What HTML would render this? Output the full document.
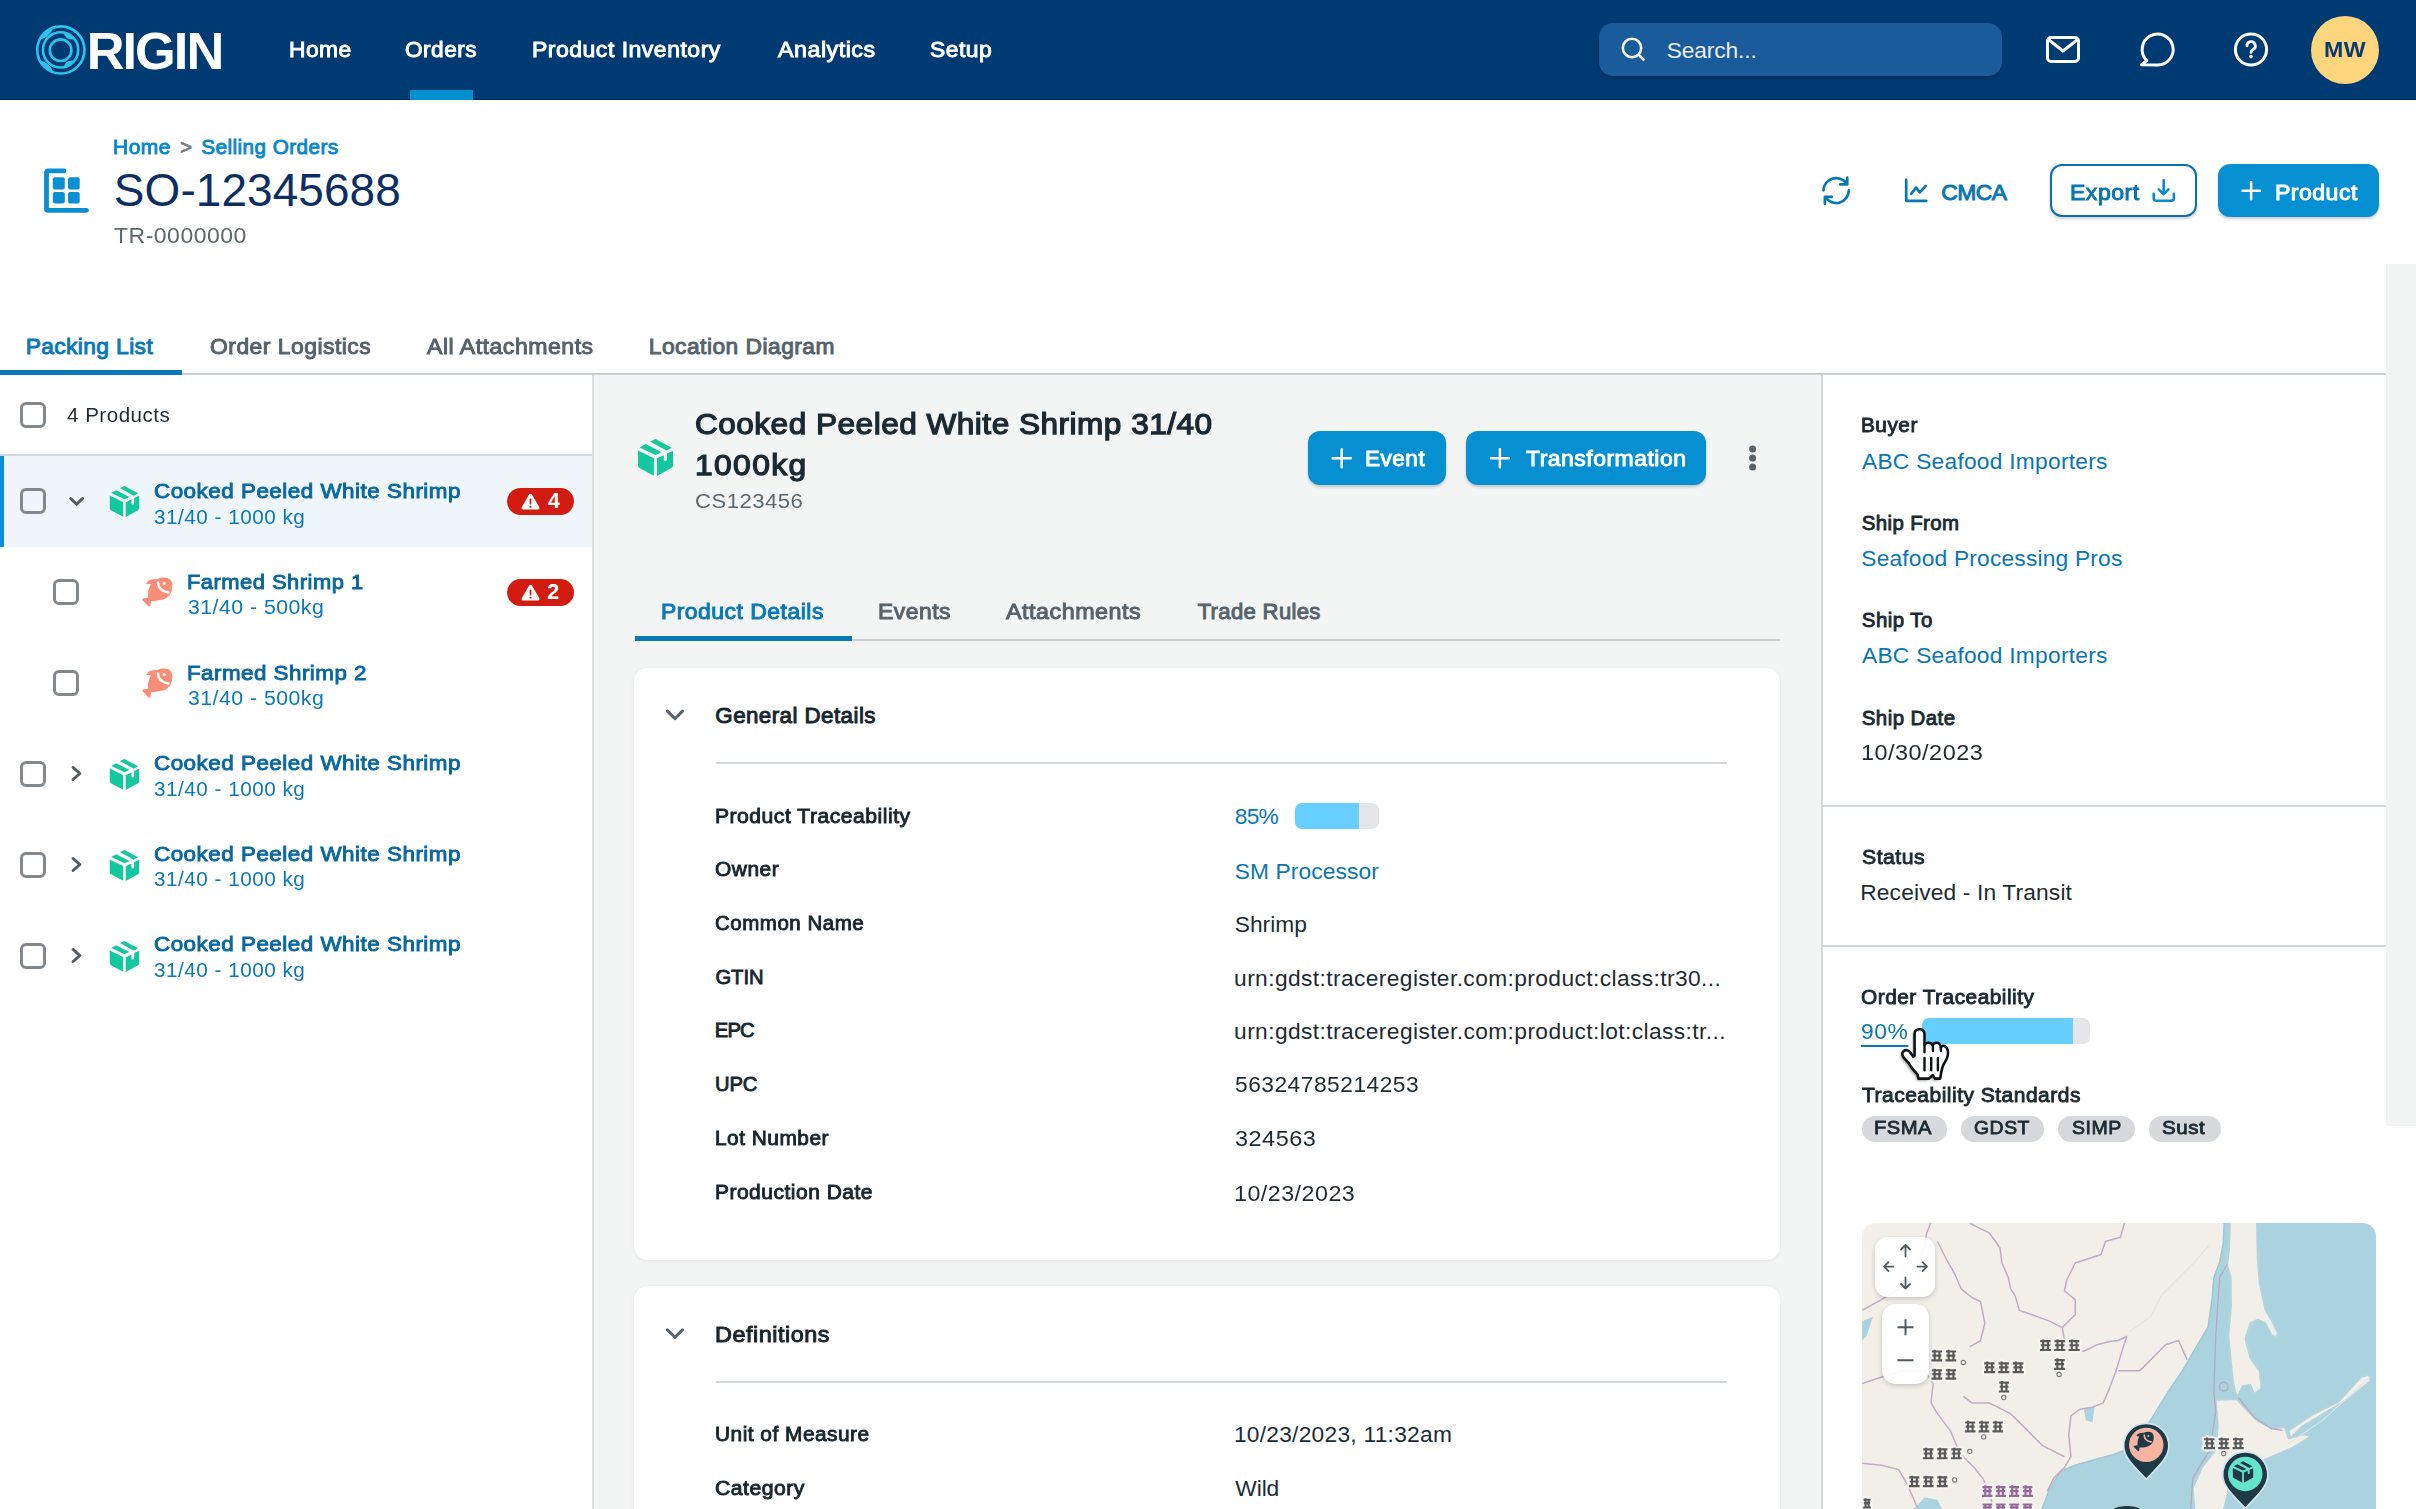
<!DOCTYPE html>
<html><head><meta charset="utf-8"><title>SO-12345688</title>
<style>
html,body{margin:0;padding:0;width:2416px;height:1509px;overflow:hidden;background:#fff;font-family:"Liberation Sans",sans-serif}
.a{position:absolute}
.t{position:absolute;white-space:nowrap;line-height:0;font-family:"Liberation Sans",sans-serif}
svg{position:absolute;overflow:visible}
.cb{position:absolute;width:20px;height:20px;border:3px solid #81898e;border-radius:6px;box-sizing:content-box}
</style></head><body>
<!-- HEADER -->
<div class="a" style="left:0;top:0;width:2416px;height:100px;background:#003a73"></div>
<div class="a" style="left:0;top:99px;width:2416px;height:1px;background:#00285e"></div>
<div class="a" style="left:410px;top:90px;width:63px;height:10px;background:#0090cf"></div>
<svg style="left:0;top:0" width="100" height="100">
 <g fill="none" stroke="#2cc3ee" stroke-width="2.6">
  <circle cx="60.85" cy="49.95" r="23.6"/>
  <circle cx="60.6" cy="49.9" r="17.6"/>
  <circle cx="60.6" cy="50.2" r="10.8"/>
  <path d="M 39.23 39.94 A 23.8 23.8 0 0 1 53.45 27.36 Q 49.87 37.64 39.23 39.94 Z" fill="#2cc3ee" stroke="none"/>
  <path d="M 53.45 72.64 A 23.8 23.8 0 0 1 39.23 60.06 Q 49.87 62.36 53.45 72.64 Z" fill="#2cc3ee" stroke="none"/>
  <path d="M 63.25 32.57 A 17.6 17.6 0 0 1 74.67 39.16 Q 66.05 40.91 63.25 32.57 Z" fill="#2cc3ee" stroke="none"/>
  <path d="M 74.67 60.84 A 17.6 17.6 0 0 1 63.25 67.43 Q 66.05 59.09 74.67 60.84 Z" fill="#2cc3ee" stroke="none"/>
 </g>
</svg>
<div class="a" style="left:1599px;top:23px;width:403px;height:53px;border-radius:14px;background:#1a5b9b;box-shadow:0 2px 3px rgba(0,0,0,0.25)"></div>
<svg style="left:1599px;top:23px" width="60" height="53">
 <g fill="none" stroke="#f4f7fa" stroke-width="2.6" stroke-linecap="round">
  <circle cx="33" cy="25" r="9.2"/>
  <line x1="39.8" y1="31.8" x2="44.5" y2="36.5"/>
 </g>
</svg>
<svg style="left:2040px;top:28px" width="240" height="44">
 <g fill="none" stroke="#fff" stroke-width="3" stroke-linecap="round" stroke-linejoin="round">
  <rect x="7.5" y="9.5" width="31" height="24" rx="3.5"/>
  <polyline points="9,12 23,23 37,12"/>
  <path d="M 117 37 A 15.5 15.5 0 1 0 106.8 32.6 L 101.5 36.8 Z"/>
  <circle cx="211" cy="21.5" r="15.6"/>
 </g>
 <path d="M 206.9 17.9 A 4.2 4.2 0 1 1 213.2 21.5 Q 211 22.8 211 24.4" fill="none" stroke="#fff" stroke-width="2.8" stroke-linecap="round"/>
 <circle cx="211" cy="28.6" r="1.8" fill="#fff"/>
</svg>
<div class="a" style="left:2311px;top:16px;width:68px;height:68px;border-radius:50%;background:#fdd57c"></div>
<!-- PAGE HEADER -->
<svg style="left:40px;top:164px" width="54" height="54">
 <path d="M 24 6.8 L 8.3 6.8 Q 6.5 6.8 6.5 8.6 L 6.5 45.5 Q 6.5 46.3 8.3 46.3 L 46.5 46.3" fill="none" stroke="#0b8fd3" stroke-width="4.8" stroke-linecap="round" stroke-linejoin="round"/>
 <g fill="#0b8fd3">
  <rect x="12.8" y="13.2" width="12" height="12.4" rx="2"/>
  <rect x="28" y="13.2" width="11.7" height="12.4" rx="2"/>
  <rect x="12.8" y="28" width="12" height="11.6" rx="2"/>
  <rect x="28" y="28" width="11.7" height="11.6" rx="2"/>
 </g>
</svg>
<svg style="left:1815px;top:170px" width="120" height="40">
 <g fill="none" stroke="#0a77b3" stroke-width="2.7" stroke-linecap="round" stroke-linejoin="round">
  <path d="M 8.4 20.4 A 12.7 12.7 0 0 1 31.5 13.5"/>
  <path d="M 32.2 7.5 L 32.3 14.4 L 25.3 14.4"/>
  <path d="M 33.8 20.4 A 12.7 12.7 0 0 1 10.6 27.5"/>
  <path d="M 9.9 33.8 L 9.9 26.8 L 16.9 26.8"/>
  <path d="M 91.2 9.9 L 91.2 30.8 L 111.3 30.8"/>
  <path d="M 96.1 23.8 L 101.1 17.6 L 104.8 22.4 L 110.8 15.9"/>
 </g>
</svg>
<div class="a" style="left:2050px;top:164px;width:143px;height:49px;border:2px solid #0a6fb0;border-radius:12px;background:#fff;box-shadow:0 2px 3px rgba(0,0,0,0.18)"></div>
<svg style="left:2140px;top:170px" width="40" height="40">
 <g fill="none" stroke="#0a8bcf" stroke-width="2.6" stroke-linecap="round" stroke-linejoin="round">
  <path d="M 23.7 10.2 L 23.7 24.2 M 18.8 19.4 L 23.7 24.2 L 28.5 19.4"/>
  <path d="M 13.7 23.7 L 13.7 28.3 Q 13.7 30.7 16.1 30.7 L 31.5 30.7 Q 33.9 30.7 33.9 28.3 L 33.9 23.7"/>
 </g>
</svg>
<div class="a" style="left:2218px;top:164px;width:161px;height:53px;border-radius:12px;background:#068fd1;box-shadow:0 2px 3px rgba(0,0,0,0.2)"></div>
<svg style="left:2230px;top:170px" width="40" height="40">
 <path d="M 12.5 20.7 L 29.8 20.7 M 21.1 12.1 L 21.1 29.3" stroke="#fff" stroke-width="2.5" stroke-linecap="round"/>
</svg>
<svg width="0" height="0" style="left:0;top:0">
 <defs>
  <symbol id="cube" viewBox="0 0 50 50">
   <path d="M 8 18.5 L 23.9 26.2 L 23.9 43.7 L 9.5 36 Q 8 35.2 8 33.5 Z"/>
   <path d="M 27 26.3 L 33.8 23.2 L 33.8 27.6 Q 33.8 29 35.4 29 Q 37 29 37 27.6 L 37 21.5 L 43 18.8 L 43 33.5 Q 43 35 41.6 35.8 L 27 43.9 Z"/>
   <path d="M 9.8 15.4 L 15.6 12.1 L 31.5 20.2 L 25.5 22.9 Z"/>
   <path d="M 20.2 9.6 L 25.5 7.1 L 41.7 15.7 L 36.4 18.6 Z"/>
  </symbol>
  <symbol id="fish" viewBox="0 0 45 45">
   <path d="M 11.3 13.4 C 13 10.5 15.5 9.2 17.9 9.2 L 22.7 8.9 C 25 7.8 27 7.4 28.3 7.5 C 31.5 7.6 34 8.3 35.2 9.5 C 37 11.5 37.5 14 37.3 16 C 37.2 19 36.7 20.9 36.7 20.9 C 35.5 24 34.5 25.5 32.8 26.8 C 31 28.5 29 29.5 26.8 29.8 C 23 30.7 19 31 16.1 31 L 15.5 35.5 C 15.3 36.5 14.3 36.9 13.7 36.5 L 7.6 30.4 C 7 29.6 7.4 28.6 8.2 28.5 L 13.1 27.7 C 12.9 25 13 22.5 13.4 20.9 C 13.9 18 14.8 15.8 16.1 14.3 L 12.5 14 C 11.4 14 10.9 13.8 11.3 13.4 Z"/>
   <circle cx="29.2" cy="13.6" r="1.5" style="fill:var(--bg)"/>
   <path d="M 23 12.5 Q 23.5 21 33.4 22.6" style="fill:none;stroke:var(--bg)" stroke-width="2.5" stroke-linecap="round"/>
  </symbol>
  <symbol id="warn" viewBox="0 0 20 18">
   <path d="M 10 0.6 Q 11 0.6 11.6 1.7 L 19.3 15 Q 19.9 16.9 18.2 17.3 L 1.8 17.3 Q 0.1 16.9 0.7 15 L 8.4 1.7 Q 9 0.6 10 0.6 Z" fill="#fff"/>
   <rect x="9.1" y="5.6" width="1.8" height="6.4" rx="0.9" fill="#d21c12"/>
   <circle cx="10" cy="14.4" r="1.1" fill="#d21c12"/>
  </symbol>
 </defs>
</svg>
<!-- TOP TABS -->
<div class="a" style="left:2386px;top:264px;width:30px;height:862px;background:#f2f4f4"></div>
<div class="a" style="left:0;top:373px;width:2386px;height:2px;background:#c9cfd2"></div>
<div class="a" style="left:0;top:370px;width:182px;height:5px;background:#0a78b6"></div>
<!-- PANELS -->
<div class="a" style="left:594px;top:375px;width:1227px;height:1134px;background:#f3f5f5"></div>
<div class="a" style="left:592px;top:375px;width:2px;height:1134px;background:#d8dde0"></div>
<div class="a" style="left:1821px;top:375px;width:2px;height:1134px;background:#d3d8db"></div>
<!-- LEFT PANEL -->
<div class="cb" style="left:20px;top:402px"></div>
<div class="a" style="left:0;top:454px;width:592px;height:2px;background:#d3d8db"></div>
<div class="a" style="left:0;top:456px;width:592px;height:91px;background:#eef6fb"></div>
<div class="a" style="left:0;top:456px;width:4px;height:91px;background:#0a90d8"></div>
<div class="cb" style="left:20px;top:488px"></div>
<div class="cb" style="left:53px;top:579px"></div>
<div class="cb" style="left:53px;top:670px"></div>
<div class="cb" style="left:20px;top:761px"></div>
<div class="cb" style="left:20px;top:852px"></div>
<div class="cb" style="left:20px;top:943px"></div>
<svg style="left:0;top:0" width="600" height="1000">
 <g fill="none" stroke="#525c62" stroke-width="3" stroke-linecap="round" stroke-linejoin="round">
  <path d="M 70.7 498.5 L 76.6 504.3 L 82.5 498.5"/>
  <path d="M 73.1 767.5 L 79.9 773.5 L 73.1 779.5"/>
  <path d="M 73.1 858.5 L 79.9 864.5 L 73.1 870.5"/>
  <path d="M 73.1 949.5 L 79.9 955.5 L 73.1 961.5"/>
 </g>
</svg>
<svg style="left:102.8px;top:479.6px;fill:#13c79f" width="42.1" height="42.1"><use href="#cube"/></svg>
<svg style="left:102.8px;top:752.6px;fill:#13c79f" width="42.1" height="42.1"><use href="#cube"/></svg>
<svg style="left:102.8px;top:843.6px;fill:#13c79f" width="42.1" height="42.1"><use href="#cube"/></svg>
<svg style="left:102.8px;top:934.6px;fill:#13c79f" width="42.1" height="42.1"><use href="#cube"/></svg>
<svg style="left:135px;top:570px;fill:#f88e78;--bg:#fff" width="45" height="45"><use href="#fish"/></svg>
<svg style="left:135px;top:661px;fill:#f88e78;--bg:#fff" width="45" height="45"><use href="#fish"/></svg>
<div class="a" style="left:507px;top:488px;width:67px;height:27px;border-radius:13.5px;background:#d21c12"></div>
<div class="a" style="left:507px;top:579px;width:67px;height:27px;border-radius:13.5px;background:#d21c12"></div>
<svg style="left:521px;top:492.7px" width="19" height="17.3"><use href="#warn"/></svg>
<svg style="left:521px;top:583.7px" width="19" height="17.3"><use href="#warn"/></svg>
<!-- MIDDLE -->
<svg style="left:630px;top:432px;fill:#13c79f" width="50" height="50"><use href="#cube"/></svg>
<div class="a" style="left:1308px;top:431px;width:138px;height:54px;border-radius:12px;background:#068fd1;box-shadow:0 2px 3px rgba(0,0,0,0.2)"></div>
<div class="a" style="left:1466px;top:431px;width:240px;height:54px;border-radius:12px;background:#068fd1;box-shadow:0 2px 3px rgba(0,0,0,0.2)"></div>
<svg style="left:1300px;top:440px" width="500" height="40">
 <path d="M 32.7 18.3 L 50.7 18.3 M 41.7 9.3 L 41.7 27.3 M 190.9 18.3 L 208.9 18.3 M 199.9 9.3 L 199.9 27.3" stroke="#fff" stroke-width="2.5" stroke-linecap="round"/>
 <g fill="#56636b"><circle cx="452.6" cy="8.9" r="3.5"/><circle cx="452.6" cy="18" r="3.5"/><circle cx="452.6" cy="27" r="3.5"/></g>
</svg>
<div class="a" style="left:635px;top:639px;width:1145px;height:2px;background:#c9cfd2"></div>
<div class="a" style="left:635px;top:636px;width:217px;height:5px;background:#0a78b6"></div>
<div class="a" style="left:634px;top:668px;width:1146px;height:592px;border-radius:14px;background:#fff;box-shadow:0 1px 4px rgba(0,0,0,0.07)"></div>
<div class="a" style="left:716px;top:762px;width:1011px;height:2px;background:#d2d7da"></div>
<div class="a" style="left:1295px;top:802.5px;width:84px;height:26.5px;border-radius:7px;background:#e4e6e9;overflow:hidden"><div class="a" style="left:0;top:0;width:64px;height:26.5px;background:#66cfff"></div></div>
<div class="a" style="left:634px;top:1286px;width:1146px;height:300px;border-radius:14px;background:#fff;box-shadow:0 1px 4px rgba(0,0,0,0.07)"></div>
<div class="a" style="left:716px;top:1380.5px;width:1011px;height:2px;background:#d2d7da"></div>
<svg style="left:600px;top:650px" width="100" height="720">
 <g fill="none" stroke="#56636b" stroke-width="3" stroke-linecap="round" stroke-linejoin="round">
  <path d="M 67.4 61.1 L 75 68.6 L 82.5 61.1"/>
  <path d="M 67.4 679.9 L 75 687.3 L 82.5 679.9"/>
 </g>
</svg>
<!-- RIGHT -->
<div class="a" style="left:1823px;top:805px;width:563px;height:2px;background:#d3d8db"></div>
<div class="a" style="left:1823px;top:945px;width:563px;height:2px;background:#d3d8db"></div>
<div class="a" style="left:1922px;top:1018px;width:168px;height:25.5px;border-radius:7px;background:#e4e6e9;overflow:hidden"><div class="a" style="left:0;top:0;width:151px;height:25.5px;background:#66cfff"></div></div>
<div class="a" style="left:1862px;top:1115.5px;width:85px;height:26px;border-radius:13px;background:#d5d9dc"></div>
<div class="a" style="left:1960.6px;top:1115.5px;width:83.2px;height:26px;border-radius:13px;background:#d5d9dc"></div>
<div class="a" style="left:2058px;top:1115.5px;width:77px;height:26px;border-radius:13px;background:#d5d9dc"></div>
<div class="a" style="left:2149px;top:1115.5px;width:71.6px;height:26px;border-radius:13px;background:#d5d9dc"></div>
<div class="a" style="left:1861.5px;top:1222.5px;width:514px;height:300px;border-radius:14px;overflow:hidden;background:#f2efe9">
<svg style="left:-1.5px;top:-2.5px" width="520" height="289" viewBox="0 0 2416 1343" preserveAspectRatio="none">
 <g fill="#aad3df" stroke="#9fc6d3" stroke-width="7" stroke-linejoin="round">
  <path d="M 1693 -10 L 1688 107 L 1671 196 L 1644 267 L 1635 374 L 1617 498 L 1564 587 L 1502 694 L 1430 801 L 1359 916 L 1290 1020 L 1230 1070 L 1180 1090 L 1100 1110 L 1000 1140 L 930 1170 L 880 1250 L 840 1360 L 2430 1360 L 2430 -10 Z"/>
 </g>
 <g fill="#f2efe9" stroke="#b3d3dd" stroke-width="9" stroke-linejoin="round">
  <path d="M 1719 -9 L 1715 133 L 1706 209 L 1722 267 L 1724 400 L 1711 534 L 1724 667 L 1733 756 L 1751 827 L 1777 774 L 1813 765 L 1831 809 L 1866 783 L 1857 703 L 1813 640 L 1791 551 L 1813 480 L 1848 463 L 1884 480 L 1911 534 L 1933 547 L 1942 525 L 1920 480 L 1884 418 L 1857 294 L 1848 178 L 1844 -9 Z"/>
  <path d="M 1653 836 L 1751 832 L 1786 872 L 1848 934 L 1920 970 L 1973 961 L 1991 1014 L 2062 996 L 2097 1005 L 2009 1059 L 1884 1112 L 1777 1147 L 1724 1201 L 1688 1360 L 1555 1360 L 1546 1245 L 1590 1147 L 1653 1067 L 1662 961 Z"/>
  <path d="M 1991 978 L 2097 907 L 2222 845 L 2329 729 L 2364 720 L 2373 747 L 2275 827 L 2186 881 L 2053 961 L 2000 1014 Z"/>
 </g>
 <g fill="none" stroke="#b9a6c4" stroke-width="6" stroke-linejoin="round">
  <path d="M 1706 205 L 1671 267 L 1653 534 L 1644 801 L 1653 890 L 1626 1067 L 1546 1201 L 1537 1342"/>
  <path d="M 1759 827 L 1831 916 L 1911 970 L 1964 978"/>
  <circle cx="1690" cy="775" r="20"/>
 </g>
 <g fill="#aad3df">
  <path d="M 10 470 L 60 450 L 30 540 L 10 560 Z"/>
  <path d="M 1040 880 L 1090 870 L 1080 940 L 1050 930 Z"/>
  <path d="M 250 1343 L 300 1290 L 360 1300 L 380 1343 Z"/>
 </g>
 <g fill="none" stroke="#c2aac8" stroke-width="7" stroke-linejoin="round">
  <path d="M 510 15 L 560 40 L 600 60 L 630 100 L 650 130 L 660 200 L 690 270 L 700 320 L 720 350 L 740 420 L 800 440 L 880 470 L 940 500 L 950 560 L 960 600 L 1040 610 L 1100 580 L 1160 565 L 1200 560 L 1240 540"/>
  <path d="M 1240 540 L 1220 600 L 1190 700 L 1160 780 L 1130 850 L 1080 870 L 1020 880 L 980 910 L 970 1000 L 980 1100 L 950 1150 L 900 1200 L 870 1260"/>
  <path d="M 1230 10 L 1210 80 L 1140 100 L 1120 160 L 1000 200 L 960 280 L 950 330 L 1000 370 L 1000 440 L 960 480 L 940 500"/>
  <path d="M 330 10 L 310 60 L 300 120 L 270 200 L 220 280 L 180 320 L 100 370 L 10 420"/>
  <path d="M 360 100 L 400 180 L 440 250 L 470 320 L 520 360 L 560 380 L 580 480 L 560 560 L 510 590"/>
  <path d="M 10 760 L 100 730 L 200 700 L 300 700 L 340 760 L 330 850 L 360 900 L 420 980 L 450 1050 L 480 1100 L 530 1150 L 570 1200 L 600 1260 L 620 1343"/>
  <path d="M 10 1130 L 100 1140 L 180 1160 L 220 1230 L 270 1343"/>
  <path d="M 1200 700 L 1300 700 L 1350 650 L 1420 580 L 1480 560 L 1520 650"/>
  <path d="M 480 820 L 520 850 L 600 850 L 700 900 L 760 960 L 800 1000 L 850 1050 L 950 1100"/>
 </g>
 <g fill="none" stroke="#d9e6ea" stroke-width="5">
  <path d="M 1250 520 L 1350 450 L 1400 350 L 1550 200 L 1620 120"/>
  <path d="M 1990 1040 L 2150 930 L 2370 730"/>
 </g>
 <g opacity="0.9">
 <path d="M 334 611 h 47 M 336 630 h 42 M 332 652 h 50 M 347 603 v 54 M 369 607 v 48 M 399 611 h 47 M 401 630 h 42 M 397 652 h 50 M 412 603 v 54 M 434 607 v 48" stroke="#f7f5f1" stroke-width="24" fill="none" stroke-linecap="round"/>
 <path d="M 334 698 h 47 M 336 716 h 42 M 332 737 h 50 M 347 691 v 51 M 369 695 v 46 M 399 698 h 47 M 401 716 h 42 M 397 737 h 50 M 412 691 v 51 M 434 695 v 46" stroke="#f7f5f1" stroke-width="24" fill="none" stroke-linecap="round"/>
 <path d="M 577 666 h 48 M 580 685 h 44 M 576 707 h 52 M 591 658 v 54 M 613 662 v 48 M 644 666 h 48 M 646 685 h 44 M 642 707 h 52 M 658 658 v 54 M 679 662 v 48 M 711 666 h 48 M 713 685 h 44 M 709 707 h 52 M 724 658 v 54 M 746 662 v 48" stroke="#f7f5f1" stroke-width="24" fill="none" stroke-linecap="round"/>
 <path d="M 647 756 h 45 M 649 775 h 41 M 645 797 h 48 M 659 748 v 54 M 680 752 v 48" stroke="#f7f5f1" stroke-width="24" fill="none" stroke-linecap="round"/>
 <path d="M 837 563 h 48 M 840 582 h 44 M 836 604 h 52 M 851 555 v 54 M 873 559 v 48 M 904 563 h 48 M 906 582 h 44 M 902 604 h 52 M 918 555 v 54 M 939 559 v 48 M 971 563 h 48 M 973 582 h 44 M 969 604 h 52 M 984 555 v 54 M 1006 559 v 48" stroke="#f7f5f1" stroke-width="24" fill="none" stroke-linecap="round"/>
 <path d="M 904 651 h 47 M 906 670 h 42 M 902 692 h 50 M 917 643 v 54 M 939 647 v 48" stroke="#f7f5f1" stroke-width="24" fill="none" stroke-linecap="round"/>
 <path d="M 489 941 h 46 M 491 960 h 42 M 487 982 h 50 M 502 933 v 54 M 523 937 v 48 M 553 941 h 46 M 555 960 h 42 M 551 982 h 50 M 566 933 v 54 M 587 937 v 48 M 617 941 h 46 M 619 960 h 42 M 615 982 h 50 M 630 933 v 54 M 651 937 v 48" stroke="#f7f5f1" stroke-width="24" fill="none" stroke-linecap="round"/>
 <path d="M 294 1066 h 47 M 296 1085 h 42 M 292 1107 h 50 M 307 1058 v 54 M 329 1062 v 48 M 359 1066 h 47 M 361 1085 h 42 M 357 1107 h 50 M 372 1058 v 54 M 394 1062 v 48 M 424 1066 h 47 M 426 1085 h 42 M 422 1107 h 50 M 437 1058 v 54 M 459 1062 v 48" stroke="#f7f5f1" stroke-width="24" fill="none" stroke-linecap="round"/>
 <path d="M 229 1196 h 47 M 231 1215 h 42 M 227 1237 h 50 M 242 1188 v 54 M 264 1192 v 48 M 294 1196 h 47 M 296 1215 h 42 M 292 1237 h 50 M 307 1188 v 54 M 329 1192 v 48 M 359 1196 h 47 M 361 1215 h 42 M 357 1237 h 50 M 372 1188 v 54 M 394 1192 v 48" stroke="#f7f5f1" stroke-width="24" fill="none" stroke-linecap="round"/>
 <path d="M 1599 1019 h 48 M 1602 1038 h 44 M 1598 1060 h 52 M 1613 1011 v 54 M 1635 1015 v 48 M 1666 1019 h 48 M 1668 1038 h 44 M 1664 1060 h 52 M 1680 1011 v 54 M 1701 1015 v 48 M 1733 1019 h 48 M 1735 1038 h 44 M 1731 1060 h 52 M 1746 1011 v 54 M 1768 1015 v 48" stroke="#f7f5f1" stroke-width="24" fill="none" stroke-linecap="round"/>
 <path d="M 16 1300 h 33 M 18 1316 h 29 M 15 1336 h 35 M 26 1293 v 48 M 40 1296 v 42" stroke="#f7f5f1" stroke-width="24" fill="none" stroke-linecap="round"/>
 <path d="M 569 1241 h 45 M 571 1260 h 41 M 567 1282 h 48 M 582 1233 v 54 M 602 1237 v 48 M 631 1241 h 45 M 633 1260 h 41 M 630 1282 h 48 M 644 1233 v 54 M 664 1237 v 48 M 694 1241 h 45 M 696 1260 h 41 M 692 1282 h 48 M 707 1233 v 54 M 727 1237 v 48 M 756 1241 h 45 M 758 1260 h 41 M 755 1282 h 48 M 769 1233 v 54 M 790 1237 v 48" stroke="#f7f5f1" stroke-width="24" fill="none" stroke-linecap="round"/>
 <path d="M 569 1322 h 45 M 571 1335 h 41 M 567 1349 h 48 M 582 1317 v 36 M 602 1320 v 32 M 631 1322 h 45 M 633 1335 h 41 M 630 1349 h 48 M 644 1317 v 36 M 664 1320 v 32 M 694 1322 h 45 M 696 1335 h 41 M 692 1349 h 48 M 707 1317 v 36 M 727 1320 v 32 M 756 1322 h 45 M 758 1335 h 41 M 755 1349 h 48 M 769 1317 v 36 M 790 1320 v 32" stroke="#f7f5f1" stroke-width="24" fill="none" stroke-linecap="round"/>
 </g>
 <g opacity="0.9">
 <path d="M 334 611 h 47 M 336 630 h 42 M 332 652 h 50 M 347 603 v 54 M 369 607 v 48 M 399 611 h 47 M 401 630 h 42 M 397 652 h 50 M 412 603 v 54 M 434 607 v 48" stroke="#4a4a4a" stroke-width="10" fill="none"/>
 <path d="M 334 698 h 47 M 336 716 h 42 M 332 737 h 50 M 347 691 v 51 M 369 695 v 46 M 399 698 h 47 M 401 716 h 42 M 397 737 h 50 M 412 691 v 51 M 434 695 v 46" stroke="#4a4a4a" stroke-width="10" fill="none"/>
 <path d="M 577 666 h 48 M 580 685 h 44 M 576 707 h 52 M 591 658 v 54 M 613 662 v 48 M 644 666 h 48 M 646 685 h 44 M 642 707 h 52 M 658 658 v 54 M 679 662 v 48 M 711 666 h 48 M 713 685 h 44 M 709 707 h 52 M 724 658 v 54 M 746 662 v 48" stroke="#4a4a4a" stroke-width="10" fill="none"/>
 <path d="M 647 756 h 45 M 649 775 h 41 M 645 797 h 48 M 659 748 v 54 M 680 752 v 48" stroke="#4a4a4a" stroke-width="10" fill="none"/>
 <path d="M 837 563 h 48 M 840 582 h 44 M 836 604 h 52 M 851 555 v 54 M 873 559 v 48 M 904 563 h 48 M 906 582 h 44 M 902 604 h 52 M 918 555 v 54 M 939 559 v 48 M 971 563 h 48 M 973 582 h 44 M 969 604 h 52 M 984 555 v 54 M 1006 559 v 48" stroke="#4a4a4a" stroke-width="10" fill="none"/>
 <path d="M 904 651 h 47 M 906 670 h 42 M 902 692 h 50 M 917 643 v 54 M 939 647 v 48" stroke="#4a4a4a" stroke-width="10" fill="none"/>
 <path d="M 489 941 h 46 M 491 960 h 42 M 487 982 h 50 M 502 933 v 54 M 523 937 v 48 M 553 941 h 46 M 555 960 h 42 M 551 982 h 50 M 566 933 v 54 M 587 937 v 48 M 617 941 h 46 M 619 960 h 42 M 615 982 h 50 M 630 933 v 54 M 651 937 v 48" stroke="#4a4a4a" stroke-width="10" fill="none"/>
 <path d="M 294 1066 h 47 M 296 1085 h 42 M 292 1107 h 50 M 307 1058 v 54 M 329 1062 v 48 M 359 1066 h 47 M 361 1085 h 42 M 357 1107 h 50 M 372 1058 v 54 M 394 1062 v 48 M 424 1066 h 47 M 426 1085 h 42 M 422 1107 h 50 M 437 1058 v 54 M 459 1062 v 48" stroke="#4a4a4a" stroke-width="10" fill="none"/>
 <path d="M 229 1196 h 47 M 231 1215 h 42 M 227 1237 h 50 M 242 1188 v 54 M 264 1192 v 48 M 294 1196 h 47 M 296 1215 h 42 M 292 1237 h 50 M 307 1188 v 54 M 329 1192 v 48 M 359 1196 h 47 M 361 1215 h 42 M 357 1237 h 50 M 372 1188 v 54 M 394 1192 v 48" stroke="#4a4a4a" stroke-width="10" fill="none"/>
 <path d="M 1599 1019 h 48 M 1602 1038 h 44 M 1598 1060 h 52 M 1613 1011 v 54 M 1635 1015 v 48 M 1666 1019 h 48 M 1668 1038 h 44 M 1664 1060 h 52 M 1680 1011 v 54 M 1701 1015 v 48 M 1733 1019 h 48 M 1735 1038 h 44 M 1731 1060 h 52 M 1746 1011 v 54 M 1768 1015 v 48" stroke="#4a4a4a" stroke-width="10" fill="none"/>
 <path d="M 16 1300 h 33 M 18 1316 h 29 M 15 1336 h 35 M 26 1293 v 48 M 40 1296 v 42" stroke="#4a4a4a" stroke-width="10" fill="none"/>
 <path d="M 569 1241 h 45 M 571 1260 h 41 M 567 1282 h 48 M 582 1233 v 54 M 602 1237 v 48 M 631 1241 h 45 M 633 1260 h 41 M 630 1282 h 48 M 644 1233 v 54 M 664 1237 v 48 M 694 1241 h 45 M 696 1260 h 41 M 692 1282 h 48 M 707 1233 v 54 M 727 1237 v 48 M 756 1241 h 45 M 758 1260 h 41 M 755 1282 h 48 M 769 1233 v 54 M 790 1237 v 48" stroke="#8b5b8e" stroke-width="10" fill="none"/>
 <path d="M 569 1322 h 45 M 571 1335 h 41 M 567 1349 h 48 M 582 1317 v 36 M 602 1320 v 32 M 631 1322 h 45 M 633 1335 h 41 M 630 1349 h 48 M 644 1317 v 36 M 664 1320 v 32 M 694 1322 h 45 M 696 1335 h 41 M 692 1349 h 48 M 707 1317 v 36 M 727 1320 v 32 M 756 1322 h 45 M 758 1335 h 41 M 755 1349 h 48 M 769 1317 v 36 M 790 1320 v 32" stroke="#8b5b8e" stroke-width="10" fill="none"/>
 </g>
 <g fill="none" stroke="#777" stroke-width="5">
  <circle cx="480" cy="662" r="10"/><circle cx="668" cy="825" r="10"/><circle cx="925" cy="718" r="10"/>
  <circle cx="575" cy="1008" r="10"/><circle cx="510" cy="1075" r="10"/><circle cx="440" cy="1208" r="10"/>
  <circle cx="1690" cy="1085" r="10"/>
 </g>
 <!-- markers -->
 <g>
  <path d="M 1330 945 C 1390 945 1435 990 1435 1050 C 1435 1110 1370 1160 1330 1205 C 1290 1160 1225 1110 1225 1050 C 1225 990 1270 945 1330 945 Z" fill="#1e3a47" stroke="#cfe6ec" stroke-width="8"/>
  <circle cx="1330" cy="1045" r="80" fill="#f7b4a0"/>
  <path d="M 1790 1078 C 1850 1078 1895 1125 1895 1185 C 1895 1245 1830 1295 1790 1340 C 1750 1295 1685 1245 1685 1185 C 1685 1125 1730 1078 1790 1078 Z" fill="#1e3a47" stroke="#cfe6ec" stroke-width="8"/>
  <circle cx="1790" cy="1180" r="80" fill="#64e4c9"/>
  <path d="M 1180 1343 C 1200 1325 1280 1325 1300 1343 Z" fill="#1e3a47"/>
 </g>
</svg>
<svg style="left:270px;top:207px;fill:#1e3a47;--bg:#f7b4a0" width="30" height="30" viewBox="4 4 38 38"><use href="#fish"/></svg>
<svg style="left:369px;top:237px;fill:#1e3a47" width="29" height="29" viewBox="4 4 42 42"><use href="#cube"/></svg>
<div class="a" style="left:13px;top:14px;width:60px;height:60px;border-radius:13px;background:rgba(255,255,255,0.93);box-shadow:0 2px 5px rgba(0,0,0,0.18)"></div>
<div class="a" style="left:20px;top:81px;width:47px;height:80px;border-radius:14px;background:rgba(255,255,255,0.93);box-shadow:0 2px 5px rgba(0,0,0,0.18)"></div>
<svg style="left:0;top:0" width="100" height="170">
 <g fill="none" stroke="#4f5b61" stroke-width="1.8" stroke-linecap="round" stroke-linejoin="round">
  <path d="M 43.5 22 L 43.5 33.5 M 39 26.5 L 43.5 22 L 48 26.5"/>
  <path d="M 43.5 54.5 L 43.5 65.5 M 39 61 L 43.5 65.5 L 48 61"/>
  <path d="M 22 43.6 L 31.5 43.6 M 26.5 39.1 L 22 43.6 L 26.5 48.1"/>
  <path d="M 55.5 43.6 L 65 43.6 M 60.5 39.1 L 65 43.6 L 60.5 48.1"/>
 </g>
 <path d="M 35.5 104.3 L 51.5 104.3 M 43.5 96.3 L 43.5 112.3 M 35.5 137.2 L 51.5 137.2" stroke="#4f5b61" stroke-width="2"/>
</svg>
</div>

<div class="t" style="left:288.56px;top:50.45px;font-size:22.08px;font-weight:400;-webkit-text-stroke:0.96px #ffffff;color:#ffffff;letter-spacing:0.484px;transform:scaleX(1.0325);transform-origin:1.24px 0;">Home</div>
<div class="t" style="left:405.25px;top:50.45px;font-size:22.08px;font-weight:400;-webkit-text-stroke:0.96px #ffffff;color:#ffffff;letter-spacing:0.488px;transform:scaleX(1.0238);transform-origin:0.55px 0;">Orders</div>
<div class="t" style="left:532.25px;top:50.45px;font-size:22.08px;font-weight:400;-webkit-text-stroke:0.96px #ffffff;color:#ffffff;letter-spacing:0.480px;transform:scaleX(1.0425);transform-origin:1.24px 0;">Product Inventory</div>
<div class="t" style="left:777.78px;top:50.45px;font-size:22.08px;font-weight:400;-webkit-text-stroke:0.96px #ffffff;color:#ffffff;letter-spacing:0.474px;transform:scaleX(1.0539);transform-origin:-0.48px 0;">Analytics</div>
<div class="t" style="left:930.09px;top:50.45px;font-size:22.08px;font-weight:400;-webkit-text-stroke:0.96px #ffffff;color:#ffffff;letter-spacing:0.484px;transform:scaleX(1.0337);transform-origin:0.21px 0;">Setup</div>
<div class="t" style="left:86.73px;top:50.66px;font-size:52.35px;font-weight:700;color:#ffffff;letter-spacing:-1.974px;">RIGIN</div>
<div class="t" style="left:1666.69px;top:50.11px;font-size:22.76px;font-weight:400;color:#e9eff5;letter-spacing:-0.127px;">Search...</div>
<div class="t" style="left:2323.91px;top:50.11px;font-size:22.19px;font-weight:700;color:#0a3a70;letter-spacing:0.479px;transform:scaleX(1.0432);transform-origin:1.39px 0;">MW</div>
<div class="t" style="left:113.23px;top:146.83px;font-size:20.7px;font-weight:400;-webkit-text-stroke:0.9px #0888cb;color:#0888cb;letter-spacing:0.492px;transform:scaleX(1.0156);transform-origin:1.17px 0;">Home</div>
<div class="t" style="left:180.19px;top:147.32px;font-size:20.15px;font-weight:400;-webkit-text-stroke:0.87px #737d83;color:#737d83;letter-spacing:0.000px;">&gt;</div>
<div class="t" style="left:201.20px;top:146.83px;font-size:20.7px;font-weight:400;-webkit-text-stroke:0.9px #0888cb;color:#0888cb;letter-spacing:0.449px;">Selling Orders</div>
<div class="t" style="left:113.86px;top:190.08px;font-size:45.95px;font-weight:400;color:#0b2e64;letter-spacing:0.077px;">SO-12345688</div>
<div class="t" style="left:114.14px;top:235.01px;font-size:22.76px;font-weight:400;color:#5d686e;letter-spacing:0.494px;transform:scaleX(1.0111);transform-origin:0.36px 0;">TR-0000000</div>
<div class="t" style="left:1941.32px;top:191.86px;font-size:22.91px;font-weight:400;-webkit-text-stroke:0.99px #0a77b0;color:#0a77b0;letter-spacing:-0.561px;">CMCA</div>
<div class="t" style="left:2069.61px;top:191.86px;font-size:22.91px;font-weight:400;-webkit-text-stroke:0.99px #0a77b0;color:#0a77b0;letter-spacing:0.497px;transform:scaleX(1.0062);transform-origin:1.29px 0;">Export</div>
<div class="t" style="left:2274.91px;top:191.86px;font-size:22.91px;font-weight:400;-webkit-text-stroke:0.99px #ffffff;color:#ffffff;letter-spacing:0.498px;transform:scaleX(1.0047);transform-origin:1.29px 0;">Product</div>
<div class="t" style="left:25.72px;top:346.01px;font-size:22.77px;font-weight:400;-webkit-text-stroke:0.99px #0a78b6;color:#0a78b6;letter-spacing:0.386px;">Packing List</div>
<div class="t" style="left:209.83px;top:346.01px;font-size:22.77px;font-weight:400;-webkit-text-stroke:0.99px #56636b;color:#56636b;letter-spacing:0.498px;transform:scaleX(1.0037);transform-origin:0.57px 0;">Order Logistics</div>
<div class="t" style="left:427.10px;top:346.01px;font-size:22.77px;font-weight:400;-webkit-text-stroke:0.99px #56636b;color:#56636b;letter-spacing:0.493px;transform:scaleX(1.0141);transform-origin:-0.49px 0;">All Attachments</div>
<div class="t" style="left:648.82px;top:346.01px;font-size:22.77px;font-weight:400;-webkit-text-stroke:0.99px #56636b;color:#56636b;letter-spacing:0.481px;">Location Diagram</div>
<div class="t" style="left:67.08px;top:415.25px;font-size:20.34px;font-weight:400;color:#1c2b33;letter-spacing:0.494px;transform:scaleX(1.0117);transform-origin:0.32px 0;">4 Products</div>
<div class="t" style="left:154.28px;top:490.73px;font-size:20.7px;font-weight:400;-webkit-text-stroke:0.9px #0a689f;color:#0a689f;letter-spacing:0.462px;transform:scaleX(1.0834);transform-origin:0.52px 0;">Cooked Peeled White Shrimp</div>
<div class="t" style="left:154.18px;top:516.50px;font-size:19.91px;font-weight:400;color:#0b7ab9;letter-spacing:0.481px;transform:scaleX(1.0393);transform-origin:0.62px 0;">31/40 - 1000 kg</div>
<div class="t" style="left:187.43px;top:581.83px;font-size:20.7px;font-weight:400;-webkit-text-stroke:0.9px #0a689f;color:#0a689f;letter-spacing:0.472px;transform:scaleX(1.0585);transform-origin:1.17px 0;">Farmed Shrimp 1</div>
<div class="t" style="left:187.98px;top:606.90px;font-size:19.91px;font-weight:400;color:#0b7ab9;letter-spacing:0.469px;transform:scaleX(1.0656);transform-origin:0.62px 0;">31/40 - 500kg</div>
<div class="t" style="left:187.43px;top:672.83px;font-size:20.7px;font-weight:400;-webkit-text-stroke:0.9px #0a689f;color:#0a689f;letter-spacing:0.463px;transform:scaleX(1.0799);transform-origin:1.17px 0;">Farmed Shrimp 2</div>
<div class="t" style="left:187.98px;top:698.00px;font-size:19.91px;font-weight:400;color:#0b7ab9;letter-spacing:0.469px;transform:scaleX(1.0656);transform-origin:0.62px 0;">31/40 - 500kg</div>
<div class="t" style="left:154.28px;top:763.03px;font-size:20.7px;font-weight:400;-webkit-text-stroke:0.9px #0a689f;color:#0a689f;letter-spacing:0.462px;transform:scaleX(1.0834);transform-origin:0.52px 0;">Cooked Peeled White Shrimp</div>
<div class="t" style="left:154.18px;top:788.60px;font-size:19.91px;font-weight:400;color:#0b7ab9;letter-spacing:0.481px;transform:scaleX(1.0393);transform-origin:0.62px 0;">31/40 - 1000 kg</div>
<div class="t" style="left:154.28px;top:853.83px;font-size:20.7px;font-weight:400;-webkit-text-stroke:0.9px #0a689f;color:#0a689f;letter-spacing:0.462px;transform:scaleX(1.0834);transform-origin:0.52px 0;">Cooked Peeled White Shrimp</div>
<div class="t" style="left:154.18px;top:879.10px;font-size:19.91px;font-weight:400;color:#0b7ab9;letter-spacing:0.481px;transform:scaleX(1.0393);transform-origin:0.62px 0;">31/40 - 1000 kg</div>
<div class="t" style="left:154.28px;top:944.43px;font-size:20.7px;font-weight:400;-webkit-text-stroke:0.9px #0a689f;color:#0a689f;letter-spacing:0.462px;transform:scaleX(1.0834);transform-origin:0.52px 0;">Cooked Peeled White Shrimp</div>
<div class="t" style="left:154.18px;top:969.70px;font-size:19.91px;font-weight:400;color:#0b7ab9;letter-spacing:0.481px;transform:scaleX(1.0393);transform-origin:0.62px 0;">31/40 - 1000 kg</div>
<div class="t" style="left:548.00px;top:500.91px;font-size:21.34px;font-weight:700;color:#ffffff;letter-spacing:0.000px;">4</div>
<div class="t" style="left:547.33px;top:591.91px;font-size:21.34px;font-weight:700;color:#ffffff;letter-spacing:0.000px;">2</div>
<div class="t" style="left:695.27px;top:424.46px;font-size:28.98px;font-weight:400;-webkit-text-stroke:1.25px #1a2a33;color:#1a2a33;letter-spacing:0.459px;transform:scaleX(1.0894);transform-origin:0.73px 0;">Cooked Peeled White Shrimp 31/40</div>
<div class="t" style="left:694.81px;top:464.76px;font-size:28.98px;font-weight:400;-webkit-text-stroke:1.25px #1a2a33;color:#1a2a33;letter-spacing:1.241px;transform:scaleX(1.1000);transform-origin:1.19px 0;">1000kg</div>
<div class="t" style="left:695.03px;top:500.70px;font-size:20.77px;font-weight:400;color:#5b6870;letter-spacing:0.470px;transform:scaleX(1.0639);transform-origin:0.97px 0;">CS123456</div>
<div class="t" style="left:1365.36px;top:458.95px;font-size:22.08px;font-weight:400;-webkit-text-stroke:0.96px #ffffff;color:#ffffff;letter-spacing:0.489px;transform:scaleX(1.0220);transform-origin:1.24px 0;">Event</div>
<div class="t" style="left:1526.13px;top:458.95px;font-size:22.08px;font-weight:400;-webkit-text-stroke:0.96px #ffffff;color:#ffffff;letter-spacing:0.481px;transform:scaleX(1.0392);transform-origin:-0.14px 0;">Transformation</div>
<div class="t" style="left:661.36px;top:611.65px;font-size:22.08px;font-weight:400;-webkit-text-stroke:0.96px #0a78b6;color:#0a78b6;letter-spacing:0.482px;transform:scaleX(1.0380);transform-origin:1.24px 0;">Product Details</div>
<div class="t" style="left:877.96px;top:611.65px;font-size:22.08px;font-weight:400;-webkit-text-stroke:0.96px #56636b;color:#56636b;letter-spacing:0.482px;transform:scaleX(1.0371);transform-origin:1.24px 0;">Events</div>
<div class="t" style="left:1006.38px;top:611.65px;font-size:22.08px;font-weight:400;-webkit-text-stroke:0.96px #56636b;color:#56636b;letter-spacing:0.473px;transform:scaleX(1.0570);transform-origin:-0.48px 0;">Attachments</div>
<div class="t" style="left:1197.63px;top:611.65px;font-size:22.08px;font-weight:400;-webkit-text-stroke:0.96px #56636b;color:#56636b;letter-spacing:0.333px;">Trade Rules</div>
<div class="t" style="left:715.34px;top:715.86px;font-size:22.35px;font-weight:400;-webkit-text-stroke:0.97px #17262e;color:#17262e;letter-spacing:0.438px;">General Details</div>
<div class="t" style="left:714.76px;top:815.62px;font-size:20.15px;font-weight:400;-webkit-text-stroke:0.87px #17262e;color:#17262e;letter-spacing:0.476px;transform:scaleX(1.0498);transform-origin:1.14px 0;">Product Traceability</div>
<div class="t" style="left:715.39px;top:869.22px;font-size:20.15px;font-weight:400;-webkit-text-stroke:0.87px #17262e;color:#17262e;letter-spacing:0.481px;transform:scaleX(1.0393);transform-origin:0.51px 0;">Owner</div>
<div class="t" style="left:715.39px;top:923.02px;font-size:20.15px;font-weight:400;-webkit-text-stroke:0.87px #17262e;color:#17262e;letter-spacing:0.491px;transform:scaleX(1.0186);transform-origin:0.51px 0;">Common Name</div>
<div class="t" style="left:715.39px;top:976.62px;font-size:20.15px;font-weight:400;-webkit-text-stroke:0.87px #17262e;color:#17262e;letter-spacing:0.029px;">GTIN</div>
<div class="t" style="left:714.76px;top:1030.32px;font-size:20.15px;font-weight:400;-webkit-text-stroke:0.87px #17262e;color:#17262e;letter-spacing:-0.764px;">EPC</div>
<div class="t" style="left:715.08px;top:1084.02px;font-size:20.15px;font-weight:400;-webkit-text-stroke:0.87px #17262e;color:#17262e;letter-spacing:-0.178px;">UPC</div>
<div class="t" style="left:714.76px;top:1137.62px;font-size:20.15px;font-weight:400;-webkit-text-stroke:0.87px #17262e;color:#17262e;letter-spacing:0.483px;transform:scaleX(1.0357);transform-origin:1.14px 0;">Lot Number</div>
<div class="t" style="left:714.76px;top:1191.72px;font-size:20.15px;font-weight:400;-webkit-text-stroke:0.87px #17262e;color:#17262e;letter-spacing:0.480px;transform:scaleX(1.0422);transform-origin:1.14px 0;">Production Date</div>
<div class="t" style="left:1234.79px;top:816.21px;font-size:22.76px;font-weight:400;color:#0a76b2;letter-spacing:-0.782px;">85%</div>
<div class="t" style="left:1234.79px;top:870.51px;font-size:22.76px;font-weight:400;color:#0a76b2;letter-spacing:0.101px;">SM Processor</div>
<div class="t" style="left:1234.79px;top:923.91px;font-size:22.76px;font-weight:400;color:#1c2b33;letter-spacing:0.008px;">Shrimp</div>
<div class="t" style="left:1234.08px;top:977.71px;font-size:22.76px;font-weight:400;color:#1c2b33;letter-spacing:0.403px;">urn:gdst:traceregister.com:product:class:tr30...</div>
<div class="t" style="left:1234.08px;top:1030.61px;font-size:22.76px;font-weight:400;color:#1c2b33;letter-spacing:0.405px;">urn:gdst:traceregister.com:product:lot:class:tr...</div>
<div class="t" style="left:1234.79px;top:1084.41px;font-size:22.76px;font-weight:400;color:#1c2b33;letter-spacing:0.500px;transform:scaleX(1.0001);transform-origin:0.71px 0;">56324785214253</div>
<div class="t" style="left:1234.79px;top:1138.21px;font-size:22.76px;font-weight:400;color:#1c2b33;letter-spacing:0.484px;transform:scaleX(1.0321);transform-origin:0.71px 0;">324563</div>
<div class="t" style="left:1234.08px;top:1192.51px;font-size:22.76px;font-weight:400;color:#1c2b33;letter-spacing:0.490px;transform:scaleX(1.0209);transform-origin:1.42px 0;">10/23/2023</div>
<div class="t" style="left:714.54px;top:1334.56px;font-size:22.35px;font-weight:400;-webkit-text-stroke:0.97px #17262e;color:#17262e;letter-spacing:0.476px;transform:scaleX(1.0498);transform-origin:1.26px 0;">Definitions</div>
<div class="t" style="left:714.98px;top:1434.12px;font-size:20.15px;font-weight:400;-webkit-text-stroke:0.87px #17262e;color:#17262e;letter-spacing:0.483px;transform:scaleX(1.0353);transform-origin:0.82px 0;">Unit of Measure</div>
<div class="t" style="left:1233.88px;top:1434.21px;font-size:22.76px;font-weight:400;color:#1c2b33;letter-spacing:0.259px;">10/23/2023, 11:32am</div>
<div class="t" style="left:715.29px;top:1488.02px;font-size:20.15px;font-weight:400;-webkit-text-stroke:0.87px #17262e;color:#17262e;letter-spacing:0.475px;transform:scaleX(1.0516);transform-origin:0.51px 0;">Category</div>
<div class="t" style="left:1235.30px;top:1488.11px;font-size:22.76px;font-weight:400;color:#1c2b33;letter-spacing:-0.092px;">Wild</div>
<div class="t" style="left:1860.84px;top:425.42px;font-size:20.43px;font-weight:400;-webkit-text-stroke:0.88px #1a2a32;color:#1a2a32;letter-spacing:0.490px;transform:scaleX(1.0199);transform-origin:1.16px 0;">Buyer</div>
<div class="t" style="left:1862.00px;top:460.61px;font-size:22.76px;font-weight:400;color:#0a76b2;letter-spacing:0.258px;">ABC Seafood Importers</div>
<div class="t" style="left:1861.80px;top:523.02px;font-size:20.43px;font-weight:400;-webkit-text-stroke:0.88px #1a2a32;color:#1a2a32;letter-spacing:0.373px;">Ship From</div>
<div class="t" style="left:1861.29px;top:558.21px;font-size:22.76px;font-weight:400;color:#0a76b2;letter-spacing:0.195px;">Seafood Processing Pros</div>
<div class="t" style="left:1861.80px;top:620.22px;font-size:20.43px;font-weight:400;-webkit-text-stroke:0.88px #1a2a32;color:#1a2a32;letter-spacing:0.474px;">Ship To</div>
<div class="t" style="left:1862.00px;top:654.71px;font-size:22.76px;font-weight:400;color:#0a76b2;letter-spacing:0.258px;">ABC Seafood Importers</div>
<div class="t" style="left:1861.80px;top:717.92px;font-size:20.43px;font-weight:400;-webkit-text-stroke:0.88px #1a2a32;color:#1a2a32;letter-spacing:0.446px;">Ship Date</div>
<div class="t" style="left:1860.58px;top:752.31px;font-size:22.76px;font-weight:400;color:#1c2b33;letter-spacing:0.485px;transform:scaleX(1.0299);transform-origin:1.42px 0;">10/30/2023</div>
<div class="t" style="left:1861.80px;top:857.32px;font-size:20.43px;font-weight:400;-webkit-text-stroke:0.88px #1a2a32;color:#1a2a32;letter-spacing:0.481px;transform:scaleX(1.0396);transform-origin:0.20px 0;">Status</div>
<div class="t" style="left:1860.22px;top:892.31px;font-size:22.76px;font-weight:400;color:#1c2b33;letter-spacing:0.154px;">Received - In Transit</div>
<div class="t" style="left:1861.48px;top:997.02px;font-size:20.43px;font-weight:400;-webkit-text-stroke:0.88px #1a2a32;color:#1a2a32;letter-spacing:0.490px;transform:scaleX(1.0203);transform-origin:0.52px 0;">Order Traceability</div>
<div class="t" style="left:1862.12px;top:1094.62px;font-size:20.43px;font-weight:400;-webkit-text-stroke:0.88px #1a2a32;color:#1a2a32;letter-spacing:0.487px;transform:scaleX(1.0270);transform-origin:-0.12px 0;">Traceability Standards</div>
<div class="t" style="left:1861.43px;top:1030.71px;font-size:22.76px;font-weight:400;color:#0a76b2;letter-spacing:0.497px;text-decoration:underline;text-underline-offset:6px;text-decoration-thickness:2px;transform:scaleX(1.0067);transform-origin:1.07px 0;">90%</div>
<div class="t" style="left:1873.92px;top:1128.00px;font-size:19.05px;font-weight:400;-webkit-text-stroke:0.82px #1c2b33;color:#1c2b33;letter-spacing:0.472px;transform:scaleX(1.0603);transform-origin:1.08px 0;">FSMA</div>
<div class="t" style="left:1973.92px;top:1128.00px;font-size:19.05px;font-weight:400;-webkit-text-stroke:0.82px #1c2b33;color:#1c2b33;letter-spacing:0.490px;transform:scaleX(1.0206);transform-origin:0.48px 0;">GDST</div>
<div class="t" style="left:2071.81px;top:1128.00px;font-size:19.05px;font-weight:400;-webkit-text-stroke:0.82px #1c2b33;color:#1c2b33;letter-spacing:0.487px;transform:scaleX(1.0261);transform-origin:0.19px 0;">SIMP</div>
<div class="t" style="left:2162.41px;top:1128.00px;font-size:19.05px;font-weight:400;-webkit-text-stroke:0.82px #1c2b33;color:#1c2b33;letter-spacing:0.463px;transform:scaleX(1.0805);transform-origin:0.19px 0;">Sust</div>
<svg style="left:1895px;top:1020px" width="60" height="65">
 <defs><filter id="sh" x="-30%" y="-30%" width="160%" height="160%"><feGaussianBlur stdDeviation="1.6"/></filter></defs>
 <path transform="translate(-1.5,2)" d="M 24.1 9.3 C 21.5 9.3 19.6 11 19.6 13.5 L 19.6 35.5 L 18.3 36.8 L 15 32 C 13.5 30 10.5 29.5 8.5 31.2 C 7 32.5 7 35 8.6 37.4 L 13.8 43.1 C 15 45 15.6 46.3 16.4 47.4 L 22.6 54.6 L 23.5 58.6 L 34 58.6 L 37.5 55.1 L 40 58.6 L 45.2 58.6 C 45.8 54 46.5 50.5 47.4 47.4 C 48.8 43.5 50.5 41 51.7 38.8 C 53 36 53.2 33.5 53 32 C 52.6 29 51.5 26.4 48.7 25.8 C 47.5 25.5 46.3 26.3 45.9 27.6 C 45.3 24.5 43.8 22.8 41.8 22.8 C 39.5 22.8 38 24 37.9 25.5 C 37 23.5 35.5 22.8 33.6 22.8 C 31.5 22.8 29.8 24 29.5 25.2 L 29.5 14 C 29.3 11 27 9.3 24.1 9.3 Z" fill="rgba(0,0,0,0.45)" filter="url(#sh)"/>
 <path d="M 24.1 9.3 C 21.5 9.3 19.6 11 19.6 13.5 L 19.6 35.5 L 18.3 36.8 L 15 32 C 13.5 30 10.5 29.5 8.5 31.2 C 7 32.5 7 35 8.6 37.4 L 13.8 43.1 C 15 45 15.6 46.3 16.4 47.4 L 22.6 54.6 L 23.5 58.6 L 34 58.6 L 37.5 55.1 L 40 58.6 L 45.2 58.6 C 45.8 54 46.5 50.5 47.4 47.4 C 48.8 43.5 50.5 41 51.7 38.8 C 53 36 53.2 33.5 53 32 C 52.6 29 51.5 26.4 48.7 25.8 C 47.5 25.5 46.3 26.3 45.9 27.6 C 45.3 24.5 43.8 22.8 41.8 22.8 C 39.5 22.8 38 24 37.9 25.5 C 37 23.5 35.5 22.8 33.6 22.8 C 31.5 22.8 29.8 24 29.5 25.2 L 29.5 14 C 29.3 11 27 9.3 24.1 9.3 Z" fill="#fff" stroke="#0d1418" stroke-width="2.6" stroke-linejoin="round"/>
 <path d="M 29.5 24.5 L 29.5 32.3 M 37.9 25.8 L 37.9 31 M 45.9 27.6 L 45.9 31 M 29.5 38 L 29.5 50.3 M 36.2 38 L 36.2 50.3 M 42.9 38 L 42.9 50.3" stroke="#0d1418" stroke-width="2.4" stroke-linecap="round"/>
</svg>

</body></html>
